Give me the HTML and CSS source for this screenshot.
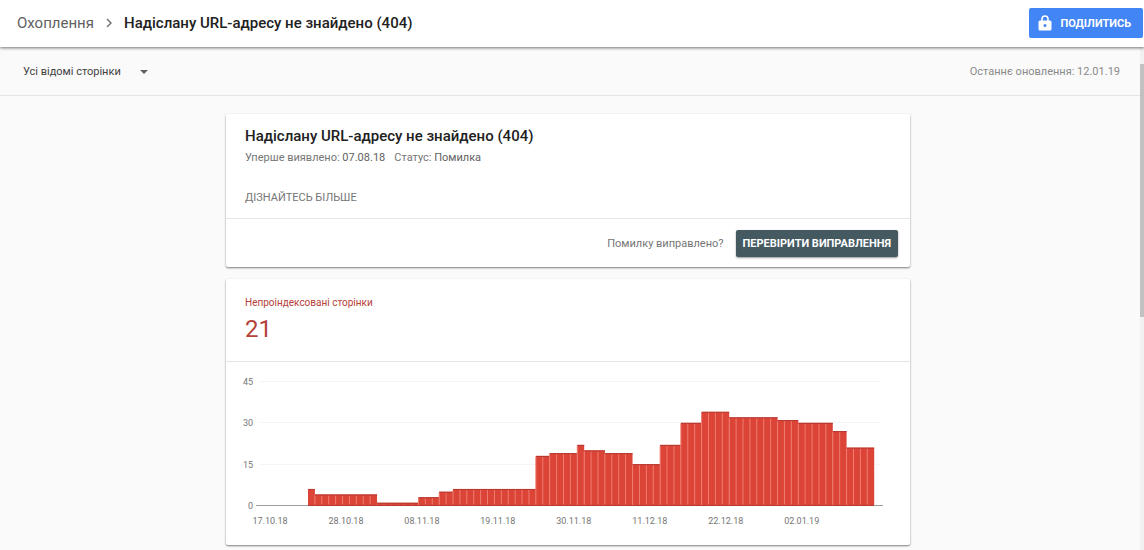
FILE: index.html
```html
<!DOCTYPE html>
<html lang="uk">
<head>
  <meta charset="utf-8">
  <meta name="viewport" content="width=device-width, initial-scale=1">
  <title>Охоплення</title>
  <link rel="stylesheet" href="styles.css">
</head>
<body>
  <header class="topbar">
    <nav class="breadcrumb" aria-label="Навігація">
      <a class="breadcrumb-link" href="#">Охоплення</a>
      <svg class="breadcrumb-chevron" viewBox="0 0 6 10" aria-hidden="true"><path d="M1 1l4 4-4 4"/></svg>
      <span class="breadcrumb-current">Надіслану URL-адресу не знайдено (404)</span>
    </nav>
    <button class="share-button" type="button">
      <svg class="share-icon" viewBox="0 0 14 16" aria-hidden="true">
        <path class="lock-shackle" d="M4 7V4a3 3 0 0 1 6 0v3"/>
        <path class="lock-body" fill-rule="evenodd" d="M2 5.500h10a1.500 1.500 0 0 1 1.500 1.500v7a1.500 1.500 0 0 1-1.500 1.500H2A1.500 1.500 0 0 1 .5 14V7A1.500 1.500 0 0 1 2 5.500zM7 9a1.500 1.500 0 1 0 0 3 1.500 1.500 0 0 0 0-3z"/>
      </svg>
      ПОДІЛИТИСЬ
    </button>
  </header>
  <div class="viewport">
    <main class="content">
      <div class="filterbar">
        <div class="filter">
          <select class="filter-select" aria-label="Фільтр сторінок">
            <option>Усі відомі сторінки</option>
          </select>
          <svg class="filter-arrow" viewBox="0 0 8 4" aria-hidden="true"><path d="M0 0h8L4 4z"/></svg>
        </div>
        <span class="updated">Останнє оновлення: 12.01.19</span>
      </div>
      <div class="cards">
        <section class="card">
          <div class="issue">
            <h1 class="issue-title">Надіслану URL-адресу не знайдено (404)</h1>
            <p class="issue-meta">
              <span>Уперше виявлено: <span class="meta-value">07.08.18</span></span>
              <span>Статус: <span class="meta-value">Помилка</span></span>
            </p>
            <a class="learn-more" href="#">ДІЗНАЙТЕСЬ БІЛЬШЕ</a>
          </div>
          <div class="issue-actions">
            <span>Помилку виправлено?</span>
            <button class="validate-button" type="button">ПЕРЕВІРИТИ ВИПРАВЛЕННЯ</button>
          </div>
        </section>
        <section class="card">
          <div class="metric">
            <h2 class="metric-label">Непроіндексовані сторінки</h2>
            <p class="metric-value">21</p>
          </div>
          <svg class="chart" id="chart" viewBox="0 0 684 183" role="img" aria-label="Непроіндексовані сторінки за днями"></svg>
        </section>
      </div>
    </main>
    <div class="scroll-track" aria-hidden="true"><div class="scroll-thumb"></div></div>
  </div>
  <script src="chart.js"></script>
</body>
</html>
```
FILE: styles.css
```css
* {
  box-sizing: border-box;
}

body {
  margin: 0;
  min-height: 100vh;
  display: flex;
  flex-direction: column;
  background: #fafafa;
  color: #757575;
  font-family: Roboto, "Liberation Sans", sans-serif;
  font-size: 11px;
  line-height: 16px;
}

button,
select {
  font-family: inherit;
}

.topbar {
  position: relative;
  display: flex;
  align-items: center;
  justify-content: space-between;
  height: 47px;
  padding: 0 1px 1px 17px;
  background: #fff;
  box-shadow: 0 1px 3px rgba(0, 0, 0, 0.55);
}

.breadcrumb {
  display: flex;
  align-items: center;
  font-size: 15px;
  line-height: 20px;
  white-space: nowrap;
}

.breadcrumb-link {
  color: #616161;
  text-decoration: none;
}

.breadcrumb-chevron {
  width: 6px;
  height: 10px;
  margin: 0 12px;
  fill: none;
  stroke: #757575;
  stroke-width: 1.5;
}

.breadcrumb-current {
  color: #212121;
  font-weight: 500;
}

.share-button {
  display: flex;
  align-items: center;
  gap: 8px;
  height: 30px;
  padding: 0 12px 0 9px;
  border: 0;
  border-radius: 2px;
  background: #4285f4;
  color: #fff;
  font-size: 11px;
  font-weight: 700;
}

.share-icon {
  width: 14px;
  height: 16px;
}

.lock-shackle {
  fill: none;
  stroke: #fff;
  stroke-width: 1.6;
}

.lock-body {
  fill: #fff;
}

.viewport {
  flex: 1;
  display: flex;
}

.content {
  flex: 1;
}

.filterbar {
  display: flex;
  align-items: center;
  justify-content: space-between;
  height: 49px;
  padding: 1px 20px 0 23px;
  border-bottom: 1px solid #e4e4e4;
}

.filter {
  display: flex;
  align-items: center;
}

.filter-select {
  appearance: none;
  margin-right: -8px;
  padding: 0 27px 0 0;
  border: 0;
  background: transparent;
  color: #424242;
  font-size: 11px;
  line-height: 16px;
}

.filter-arrow {
  width: 8px;
  height: 4px;
  fill: #616161;
  pointer-events: none;
}

.updated {
  color: #8a8a8a;
}

.cards {
  display: grid;
  gap: 12px;
  max-width: 688px;
  margin: 0 auto;
  padding: 18px 4px 5px 0;
}

.card {
  background: #fff;
  border-radius: 2px;
  box-shadow: 0 1px 2px rgba(0, 0, 0, 0.5);
}

.issue {
  padding: 12px 19px;
  border-bottom: 1px solid #e6e6e6;
}

.issue-title {
  margin: 0;
  color: #212121;
  font-size: 15px;
  font-weight: 500;
  line-height: 20px;
}

.issue-meta {
  display: flex;
  gap: 9px;
  margin: 4px 0 24px;
}

.meta-value {
  color: #616161;
}

.learn-more {
  display: block;
  color: #757575;
  text-decoration: none;
}

.issue-actions {
  display: flex;
  align-items: center;
  justify-content: flex-end;
  gap: 12px;
  height: 48px;
  padding: 1px 12px 0;
}

.validate-button {
  height: 27px;
  padding: 0 7px;
  border: 0;
  border-radius: 2px;
  background: #455a60;
  box-shadow: 0 1px 2px rgba(0, 0, 0, 0.4);
  color: #fff;
  font-size: 11px;
  font-weight: 700;
}

.metric {
  height: 83px;
  padding: 16px 19px;
  border-bottom: 1px solid #e4e4e4;
  color: #b5413a;
}

.metric-label {
  margin: 0;
  font-size: 10px;
  font-weight: 400;
  line-height: 16px;
}

.metric-value {
  margin: 4px 0 0;
  font-size: 24px;
  line-height: 28px;
}

.chart {
  display: block;
  width: 100%;
}

.chart text {
  fill: #757575;
  font-size: 9px;
}

.grid-line {
  stroke: #f5f5f5;
}

.base-line {
  stroke: #9e9e9e;
}

.bar {
  fill: #db4437;
}

.bar-gap {
  stroke: #f07c70;
}

.bar-top {
  stroke: #b53a30;
}

.scroll-track {
  width: 4px;
  padding-top: 17px;
  background: #f1f1f1;
}

.scroll-thumb {
  height: 253px;
  background: #c1c1c1;
}
```
FILE: chart.js
```js
// Runs of equal daily values, starting on 23.10.18: [value, number of days].
const runs = [
  [6, 1], [4, 9], [1, 6], [3, 3], [5, 2], [6, 12], [18, 2], [19, 4], [22, 1], [20, 3],
  [19, 4], [15, 4], [22, 3], [30, 3], [34, 4], [32, 7], [31, 3], [30, 5], [27, 2], [21, 4]
];
const dates = ['17.10.18', '28.10.18', '08.11.18', '19.11.18', '30.11.18', '11.12.18', '22.12.18', '02.01.19'];
const svg = document.getElementById('chart');
const base = 143.5;
const unit = 124 / 45;
const day = 6.905;
const firstBar = 82;

function add(name, attributes, text) {
  const node = document.createElementNS('http://www.w3.org/2000/svg', name);
  for (const key in attributes) node.setAttribute(key, attributes[key]);
  if (text !== undefined) node.textContent = text;
  svg.appendChild(node);
}

[45, 30, 15, 0].forEach(value => {
  const y = Math.round(base - value * unit - 0.5) + 0.5;
  if (value) add('line', { class: 'grid-line', x1: 33, x2: 654, y1: y, y2: y });
  add('text', { x: 27, y: y + 3, 'text-anchor': 'end' }, value);
});

let index = 0;
runs.forEach(([value, count]) => {
  const x = firstBar + index * day;
  const y = base - value * unit;
  add('rect', { class: 'bar', x: x, y: y, width: count * day, height: base - y });
  for (let i = 0; i < count; i++) {
    const left = x + i * day;
    if (index + i) add('line', { class: 'bar-gap', x1: left, x2: left, y1: y + 1, y2: base - 1 });
  }
  add('line', { class: 'bar-top', x1: x, x2: x + count * day, y1: y + 0.5, y2: y + 0.5 });
  index += count;
});

add('line', { class: 'base-line', x1: 30, x2: firstBar, y1: base, y2: base });
add('line', { class: 'bar-top', x1: firstBar, x2: firstBar + index * day, y1: base, y2: base });
add('line', { class: 'base-line', x1: firstBar + index * day, x2: 657, y1: base, y2: base });

dates.forEach((label, i) => {
  add('text', { x: 44 + i * 11 * day, y: 162, 'text-anchor': 'middle' }, label);
});
```
